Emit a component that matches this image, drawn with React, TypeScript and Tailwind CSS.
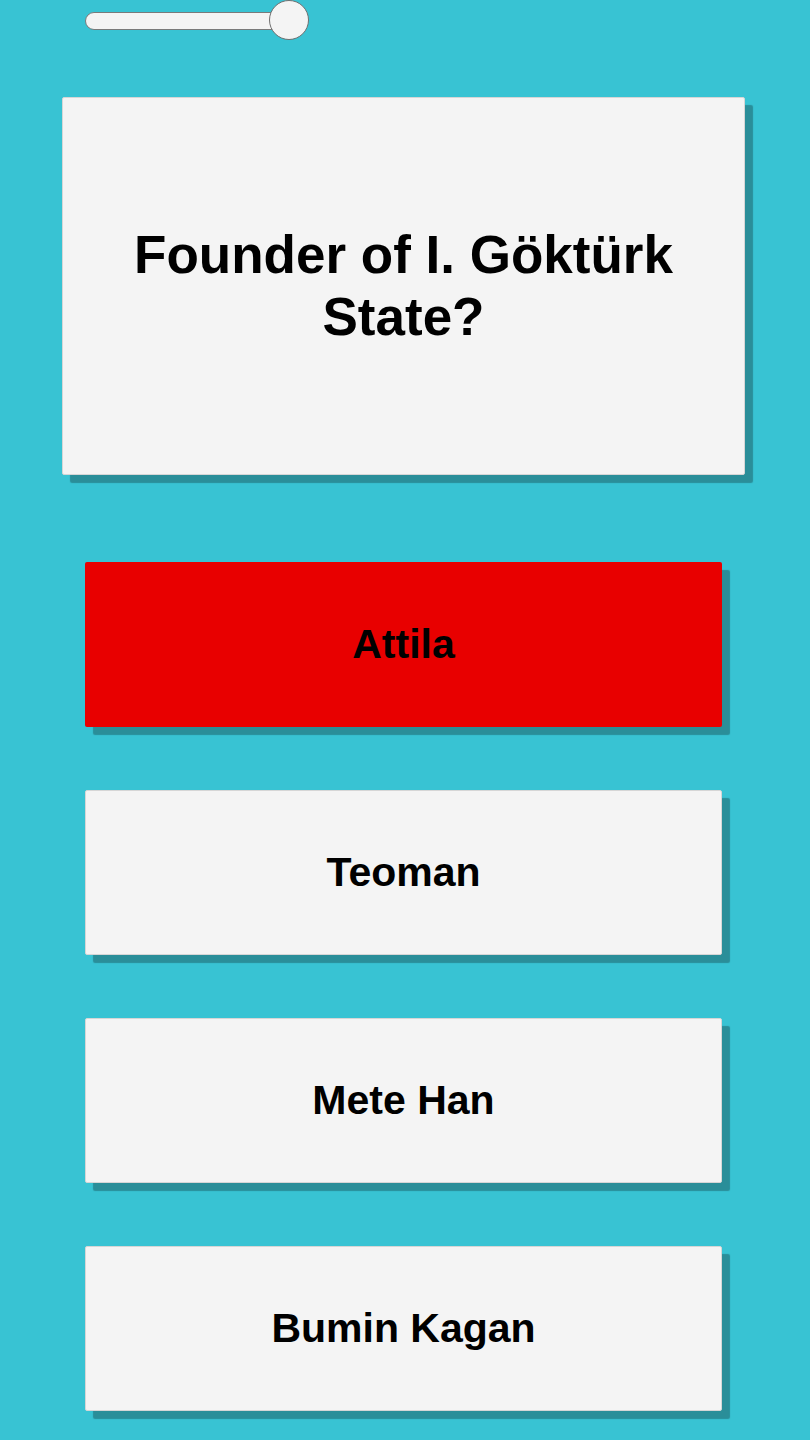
import React from 'react';

const ANSWERS = [
  { text: 'Attila', wrong: true },
  { text: 'Teoman', wrong: false },
  { text: 'Mete Han', wrong: false },
  { text: 'Bumin Kagan', wrong: false },
];

export default function App() {
  return (
    <div
      className="w-[810px] h-[1440px] bg-[#38c3d3] overflow-hidden flex flex-col"
      style={{ fontFamily: '"Liberation Sans", Arial, sans-serif' }}
    >
      {/* Slider */}
      <div className="relative h-[41px] ml-[85px] w-[225px]">
        <div className="absolute left-0 top-[12px] w-[210px] h-[18px] rounded-full bg-[#f4f4f4] border border-[#7a7a7a]" />
        <div className="absolute left-[184px] top-0 w-[40px] h-[40px] rounded-full bg-[#f4f4f4] border border-[#6f6f6f]" />
      </div>

      {/* Question card */}
      <div className="mt-[56px] ml-[62px] w-[683px] h-[378px] bg-[#f4f4f4] border border-[#d6d6d6] rounded-[2px] shadow-[8px_8px_1px_#2a8e99] flex items-center justify-center px-8">
        <h1 className="text-[53px] leading-[62px] font-bold text-black text-center">
          Founder of I. Göktürk State?
        </h1>
      </div>

      {/* Answers */}
      <div className="mt-[87px] ml-[85px] w-[637px] flex flex-col gap-[63px]">
        {ANSWERS.map((a) => (
          <div
            key={a.text}
            className={`h-[165px] rounded-[2px] shadow-[8px_8px_1px_#2a8e99] flex items-center justify-center ${
              a.wrong ? 'bg-[#e80000]' : 'bg-[#f4f4f4] border border-[#d6d6d6]'
            }`}
          >
            <span className="text-[41px] font-bold text-black">{a.text}</span>
          </div>
        ))}
      </div>
    </div>
  );
}
